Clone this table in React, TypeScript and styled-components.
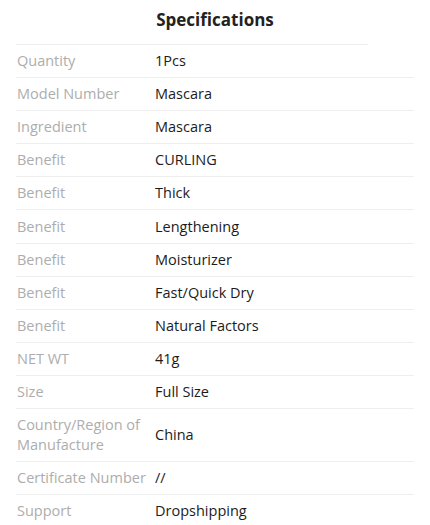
import React from "react";
import styled, { createGlobalStyle } from "styled-components";

const Global = createGlobalStyle`
  html, body { margin: 0; padding: 0; background: #fff; }
  body { font-family: "Open Sans", "Noto Sans", sans-serif; -webkit-font-smoothing: antialiased; }
`;

const Card = styled.div`
  width: 430px;
  height: 525px;
  overflow: hidden;
  background: #fff;
  box-sizing: border-box;
  padding: 0 16px;
`;

const Title = styled.h2`
  margin: 0 46px 0 0;
  height: 45px;
  box-sizing: border-box;
  padding-top: 7px;
  padding-left: 46px;
  text-align: center;
  font-size: 17px;
  font-weight: 700;
  color: #222;
  line-height: 26px;
  border-bottom: 1px solid #eeeeee;
`;

const Row = styled.div<{ $tall?: boolean }>`
  display: grid;
  grid-template-columns: 139px 1fr;
  align-items: center;
  min-height: ${(p) => (p.$tall ? 52 : 32.1)}px;
  border-bottom: 1px solid #eeeeee;
  font-size: 14.5px;
`;

const Label = styled.div`
  color: #adadad;
  line-height: 20px;
  padding-left: 1px;
`;

const Value = styled.div`
  color: #1c1c1c;
  line-height: 20px;
`;

const rows: [string, string][] = [
  ["Quantity", "1Pcs"],
  ["Model Number", "Mascara"],
  ["Ingredient", "Mascara"],
  ["Benefit", "CURLING"],
  ["Benefit", "Thick"],
  ["Benefit", "Lengthening"],
  ["Benefit", "Moisturizer"],
  ["Benefit", "Fast/Quick Dry"],
  ["Benefit", "Natural Factors"],
  ["NET WT", "41g"],
  ["Size", "Full Size"],
  ["Country/Region of Manufacture", "China"],
  ["Certificate Number", "//"],
  ["Support", "Dropshipping"],
];

export default function App() {
  return (
    <>
      <Global />
      <Card>
        <Title>Specifications</Title>
        {rows.map(([k, v], i) => (
          <Row key={i} $tall={k.length > 20}>
            <Label>{k}</Label>
            <Value>{v}</Value>
          </Row>
        ))}
      </Card>
    </>
  );
}
